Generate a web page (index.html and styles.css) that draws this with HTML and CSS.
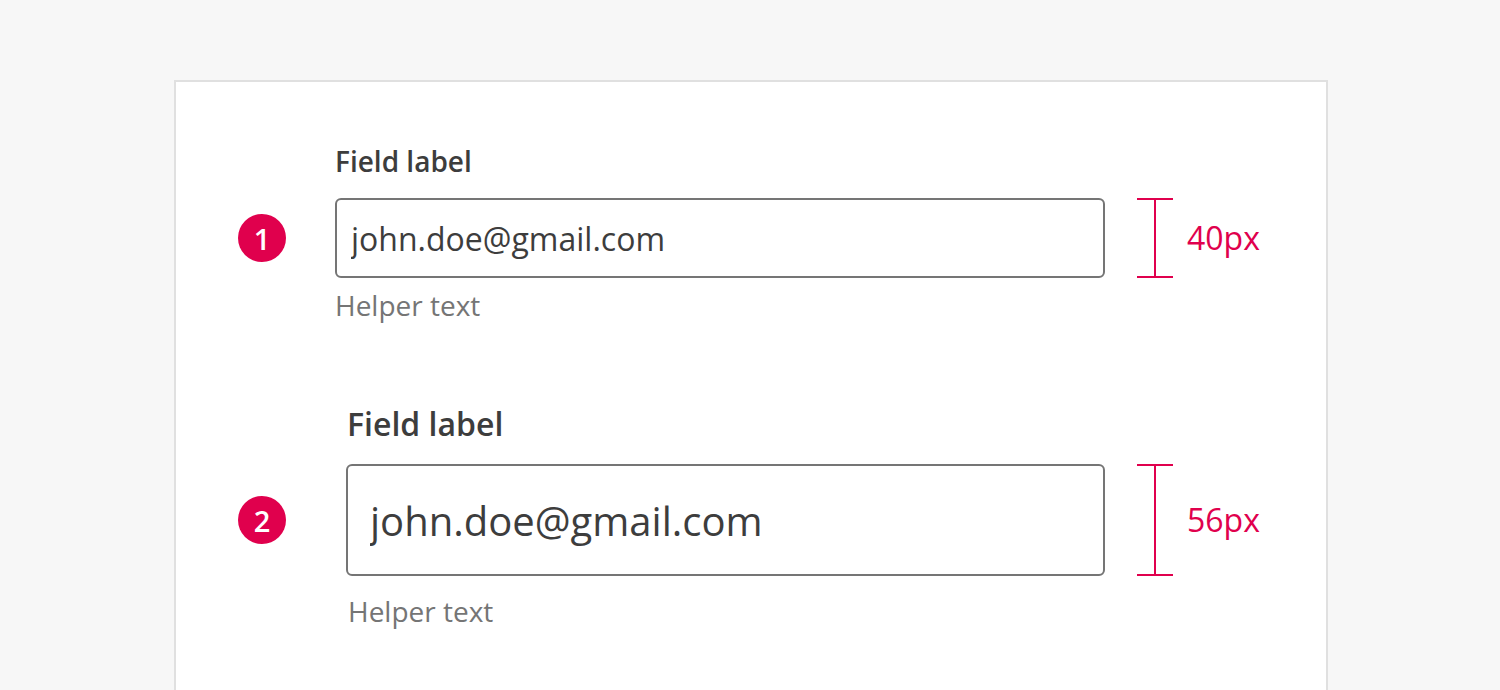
FILE: index.html
```html
<!DOCTYPE html>
<html lang="en">
<head>
<meta charset="utf-8">
<title>Field sizes</title>
<link rel="stylesheet" href="styles.css">
</head>
<body>
<main class="card">
  <section class="row row--md">
    <label class="label" for="email-md">Field label</label>
    <span class="badge">1</span>
    <input class="input input--md" id="email-md" type="text" value="john.doe@gmail.com" readonly>
    <div class="measure measure--md">
      <span class="measure-bar"></span>
      <span class="measure-text">40px</span>
    </div>
    <p class="helper helper--md">Helper text</p>
  </section>
  <section class="row row--lg">
    <label class="label label--lg" for="email-lg">Field label</label>
    <span class="badge">2</span>
    <input class="input input--lg" id="email-lg" type="text" value="john.doe@gmail.com" readonly>
    <div class="measure measure--lg">
      <span class="measure-bar"></span>
      <span class="measure-text">56px</span>
    </div>
    <p class="helper helper--lg">Helper text</p>
  </section>
</main>
</body>
</html>
```

FILE: styles.css
```css
html, body {
  margin: 0;
  padding: 0;
  background: #f7f7f7;
}

body {
  font-family: "Open Sans", "Noto Sans", sans-serif;
  padding-top: 80px;
  height: 690px;
  box-sizing: border-box;
  overflow: hidden;
}

.card {
  box-sizing: border-box;
  margin-left: 174px;
  width: 1154px;
  height: 610px;
  background: #ffffff;
  border: 2px solid #e0e0e0;
  border-bottom: 0;
  padding: 61px 0 0 62px;
}

.row {
  display: grid;
  grid-template-columns: 97px 770px auto;
  grid-template-rows: auto auto auto;
  align-items: center;
}

.row--lg {
  grid-template-columns: 108px 759px auto;
  margin-top: 79px;
}

.label {
  grid-column: 2;
  grid-row: 1;
  font-size: 28px;
  line-height: 37px;
  font-weight: 600;
  color: #3d3d3d;
  margin-bottom: 18px;
}

.label--lg {
  font-size: 32px;
  line-height: 42px;
  margin-left: 1px;
  margin-bottom: 19px;
}

.badge {
  grid-column: 1;
  grid-row: 2;
  width: 48px;
  height: 48px;
  border-radius: 50%;
  background: #e0004d;
  color: #ffffff;
  font-size: 29px;
  font-weight: 600;
  display: flex;
  align-items: center;
  justify-content: center;
  line-height: 1;
}

.input {
  grid-column: 2;
  grid-row: 2;
  box-sizing: border-box;
  width: 100%;
  margin: 0;
  border: 2px solid #757575;
  border-radius: 6px;
  background: #ffffff;
  color: #3d3d3d;
  font-family: "Open Sans", "Noto Sans", sans-serif;
  outline: none;
}

.input--md {
  height: 80px;
  font-size: 32px;
  padding: 0 14px;
}

.input--lg {
  height: 112px;
  font-size: 40px;
  padding: 0 22px;
}

.measure {
  grid-column: 3;
  grid-row: 2;
  display: flex;
  align-items: center;
  margin-left: 32px;
}

.measure-bar {
  box-sizing: border-box;
  width: 36px;
  border-top: 2px solid #e0004d;
  border-bottom: 2px solid #e0004d;
  background: linear-gradient(#e0004d, #e0004d) center / 2px 100% no-repeat;
}

.measure--md .measure-bar {
  height: 80px;
}

.measure--lg .measure-bar {
  height: 112px;
}

.measure-text {
  margin-left: 14px;
  font-size: 32px;
  color: #e0004d;
  line-height: 1;
}

.helper {
  grid-column: 2;
  grid-row: 3;
  margin: 9px 0 0 0;
  font-size: 28px;
  line-height: 37px;
  color: #757575;
}

.helper--lg {
  margin-top: 17px;
  margin-left: 2px;
}
```
